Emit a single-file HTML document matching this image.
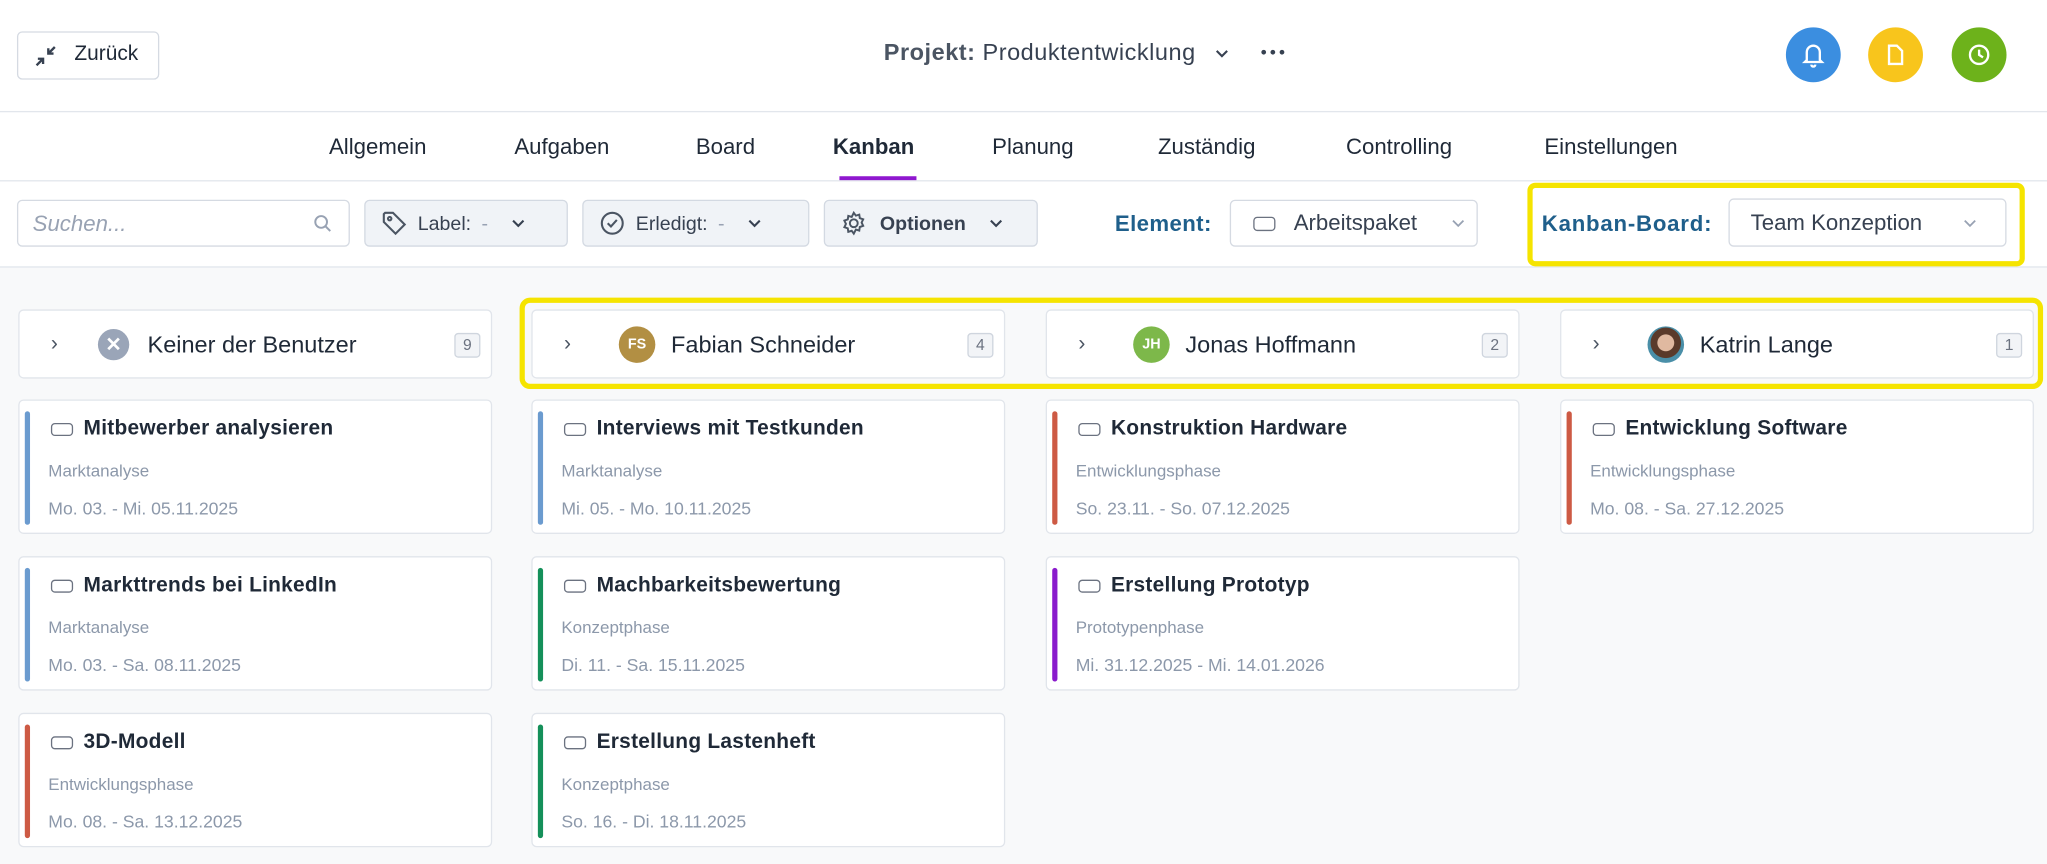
<!DOCTYPE html>
<html><head><meta charset="utf-8"><style>
*{box-sizing:border-box;margin:0;padding:0}
html,body{width:2047px;height:864px;overflow:hidden;background:#fff}
#w{position:absolute;left:0;top:0;width:1568px;height:662px;transform:scale(1.30548);transform-origin:0 0;font-family:"Liberation Sans",sans-serif;color:#1f2937;background:#f8f9fa}
.a{position:absolute}
.top{left:0;top:0;width:1568px;height:204px;background:#fff}
.hl{height:1px;background:#e2e6ec;left:0;width:1568px}
.btn{border:1px solid #d5dae2;border-radius:4px;background:#fff}
.fb{border:1px solid #d3d9e2;border-radius:4px;background:#f0f3f7;height:36px;top:153px;display:flex;align-items:center;font-size:15px;color:#374151}
.tab{top:103px;font-size:17px;color:#1f2937}
.circ{width:42px;height:42px;border-radius:50%;top:21px;display:flex;align-items:center;justify-content:center}
.col{top:237px;height:53px;width:363px;background:#fff;border:1px solid #e1e5eb;border-radius:4px}
.card{width:363px;height:103px;background:#fff;border:1px solid #e1e5eb;border-radius:4px}
.bar{position:absolute;left:4px;top:8px;width:4px;height:87px;border-radius:2px}
.ct{position:absolute;left:24px;top:13px;font-size:16px;font-weight:bold;color:#1f2937;display:flex;align-items:center;gap:8px;letter-spacing:.2px}
.ic{display:inline-block;width:17px;height:10px;border:1.6px solid #6b7280;border-radius:3px}
.ph{position:absolute;left:22px;top:46px;font-size:13px;color:#8c98aa}
.dt{position:absolute;left:22px;top:75px;font-size:13.5px;color:#8c98aa}
.cnt{position:absolute;right:8px;top:17px;width:20px;height:19px;border:1px solid #cfd5de;border-radius:3px;background:#f2f4f7;font-size:12px;color:#6b7280;text-align:center;line-height:17px}
.chev{position:absolute;left:24px;top:17px;font-size:16px;color:#4b5563}
.av{position:absolute;left:66px;top:12px;width:28px;height:28px;border-radius:50%;color:#fff;font-size:11px;font-weight:bold;display:flex;align-items:center;justify-content:center}
.nm{position:absolute;left:106px;top:16px;font-size:18px;color:#1f2937}
</style></head><body><div id="w">
<div class="a top"></div>
<div class="a hl" style="top:85px"></div>
<div class="a hl" style="top:138px"></div>
<div class="a hl" style="top:204px"></div>
<div class="a btn" style="left:13px;top:24px;width:109px;height:37px"></div>
<svg class="a" style="left:25px;top:33px" width="20" height="20" viewBox="0 0 20 20" fill="none" stroke="#374151" stroke-width="1.8"><path d="M3 17l5-5M4 12h4v4M17 3l-5 5M16 8h-4V4"/></svg>
<div class="a" style="left:57px;top:33px;font-size:16px">Zurück</div>
<div class="a" style="left:677px;top:30px;font-size:18px;letter-spacing:.4px;color:#374151;white-space:nowrap"><b style="color:#4b5563">Projekt:</b> Produktentwicklung</div>
<svg class="a" style="left:929px;top:35px" width="14" height="12" viewBox="0 0 14 12" fill="none" stroke="#374151" stroke-width="1.6"><path d="M3 4l4 4 4-4"/></svg>
<svg class="a" style="left:965px;top:36px" width="20" height="8" viewBox="0 0 20 8" fill="#374151"><circle cx="3" cy="4" r="1.8"/><circle cx="10" cy="4" r="1.8"/><circle cx="17" cy="4" r="1.8"/></svg>
<div class="a circ" style="left:1368px;background:#3b8ee0"><svg width="18" height="20" viewBox="0 0 18 20" fill="none" stroke="#fff" stroke-width="1.8"><path d="M4 14V8a5 5 0 0110 0v6l1.5 1.5h-13z M7.5 17.5a1.5 1.5 0 003 0"/></svg></div>
<div class="a circ" style="left:1431px;background:#f8c51c"><svg width="16" height="18" viewBox="0 0 16 18" fill="none" stroke="#fff" stroke-width="1.8"><path d="M3 2h6l4 4v10H3z"/></svg></div>
<div class="a circ" style="left:1495px;background:#6db21b"><svg width="20" height="20" viewBox="0 0 20 20" fill="none" stroke="#fff" stroke-width="1.8"><circle cx="10" cy="10" r="7"/><path d="M10 6v4l3 2"/></svg></div>
<div class="a tab" style="left:252px">Allgemein</div>
<div class="a tab" style="left:394px">Aufgaben</div>
<div class="a tab" style="left:533px">Board</div>
<div class="a tab" style="left:638px;font-weight:bold">Kanban</div>
<div class="a" style="left:643px;top:135px;width:59px;height:3px;background:#8f17cf"></div>
<div class="a tab" style="left:760px">Planung</div>
<div class="a tab" style="left:887px">Zuständig</div>
<div class="a tab" style="left:1031px">Controlling</div>
<div class="a tab" style="left:1183px">Einstellungen</div>
<div class="a btn" style="left:13px;top:153px;width:255px;height:36px"></div>
<div class="a" style="left:25px;top:162px;font-size:17px;font-style:italic;color:#98a2b3">Suchen...</div>
<svg class="a" style="left:240px;top:164px" width="14" height="14" viewBox="0 0 14 14" fill="none" stroke="#98a2b3" stroke-width="1.5"><circle cx="6" cy="6" r="4.5"/><path d="M9.5 9.5L13 13"/></svg>
<div class="a fb" style="left:279px;width:156px"><svg style="margin:0 8px 0 12px" width="20" height="20" viewBox="0 0 20 20" fill="none" stroke="#4b5563" stroke-width="1.6"><path d="M2 3v6l9 9 7-7-9-9H3z"/><circle cx="6.5" cy="6.5" r="1.3"/></svg>Label: <span style="color:#98a2b3;margin:0 16px 0 8px">-</span><svg width="14" height="12" viewBox="0 0 14 12" fill="none" stroke="#374151" stroke-width="1.6"><path d="M3 4l4 4 4-4"/></svg></div>
<div class="a fb" style="left:446px;width:174px"><svg style="margin:0 8px 0 12px" width="20" height="20" viewBox="0 0 20 20" fill="none" stroke="#4b5563" stroke-width="1.6"><circle cx="10" cy="10" r="8"/><path d="M6.5 10l2.5 2.5 4.5-5"/></svg>Erledigt: <span style="color:#98a2b3;margin:0 16px 0 8px">-</span><svg width="14" height="12" viewBox="0 0 14 12" fill="none" stroke="#374151" stroke-width="1.6"><path d="M3 4l4 4 4-4"/></svg></div>
<div class="a fb" style="left:631px;width:164px;font-weight:bold"><svg style="margin:0 10px 0 12px" width="20" height="20" viewBox="0 0 20 20" fill="none" stroke="#4b5563" stroke-width="1.5"><circle cx="10" cy="10" r="3"/><path d="M10 2l1.6 2.2 2.6-.8.4 2.7 2.6.9-1.2 2.5 1.2 2.5-2.6.9-.4 2.7-2.6-.8L10 18l-1.6-2.2-2.6.8-.4-2.7-2.6-.9 1.2-2.5-1.2-2.5 2.6-.9.4-2.7 2.6.8z"/></svg>Optionen<svg style="margin-left:16px" width="14" height="12" viewBox="0 0 14 12" fill="none" stroke="#374151" stroke-width="1.6"><path d="M3 4l4 4 4-4"/></svg></div>
<div class="a" style="left:854px;top:162px;font-size:17px;font-weight:bold;color:#1f5f8b;letter-spacing:.3px">Element:</div>
<div class="a btn" style="left:942px;top:153px;width:190px;height:36px"></div>
<div class="a" style="left:960px;top:166px;width:17px;height:11px;border:1.6px solid #6b7280;border-radius:3px"></div>
<div class="a" style="left:991px;top:161px;font-size:17px;color:#374151">Arbeitspaket</div>
<svg class="a" style="left:1110px;top:165px" width="14" height="12" viewBox="0 0 14 12" fill="none" stroke="#98a2b3" stroke-width="1.4"><path d="M3 4l4 4 4-4"/></svg>
<div class="a" style="left:1170px;top:140px;width:381px;height:64px;border:4px solid #f5e400;border-radius:6px"></div>
<div class="a" style="left:1181px;top:162px;font-size:17px;font-weight:bold;color:#1f5f8b;letter-spacing:.6px">Kanban-Board:</div>
<div class="a btn" style="left:1324px;top:152px;width:213px;height:37px"></div>
<div class="a" style="left:1341px;top:161px;font-size:17px;color:#374151">Team Konzeption</div>
<svg class="a" style="left:1502px;top:165px" width="14" height="12" viewBox="0 0 14 12" fill="none" stroke="#98a2b3" stroke-width="1.4"><path d="M3 4l4 4 4-4"/></svg>

<div class="a col" style="left:14px"><span class="chev">&#8250;</span><div class="av" style="background:#9aa5b8;width:24px;height:24px;top:14px;left:60px;font-size:15px">✕</div><span class="nm" style="left:98px">Keiner der Benutzer</span><span class="cnt">9</span></div>
<div class="a col" style="left:407px"><span class="chev">&#8250;</span><div class="av" style="background:#b28f43">FS</div><span class="nm">Fabian Schneider</span><span class="cnt">4</span></div>
<div class="a col" style="left:801px"><span class="chev">&#8250;</span><div class="av" style="background:#7db84a">JH</div><span class="nm">Jonas Hoffmann</span><span class="cnt">2</span></div>
<div class="a col" style="left:1195px"><span class="chev">&#8250;</span><div class="av" style="background:radial-gradient(circle at 50% 45%,#e0b9a0 0 30%,#5a3a2a 32% 55%,#4a8fa8 57%)"></div><span class="nm">Katrin Lange</span><span class="cnt">1</span></div>
<div class="a" style="left:398px;top:228px;width:1167px;height:70px;border:4px solid #f5e400;border-radius:8px"></div>

<div class="a card" style="left:14px;top:306px"><div class="bar" style="background:#6b9bcf"></div><div class="ct"><i class="ic"></i>Mitbewerber analysieren</div><div class="ph">Marktanalyse</div><div class="dt">Mo. 03. - Mi. 05.11.2025</div></div>
<div class="a card" style="left:14px;top:426px"><div class="bar" style="background:#6b9bcf"></div><div class="ct"><i class="ic"></i>Markttrends bei LinkedIn</div><div class="ph">Marktanalyse</div><div class="dt">Mo. 03. - Sa. 08.11.2025</div></div>
<div class="a card" style="left:14px;top:546px"><div class="bar" style="background:#cd5a44"></div><div class="ct"><i class="ic"></i>3D-Modell</div><div class="ph">Entwicklungsphase</div><div class="dt">Mo. 08. - Sa. 13.12.2025</div></div>
<div class="a card" style="left:407px;top:306px"><div class="bar" style="background:#6b9bcf"></div><div class="ct"><i class="ic"></i>Interviews mit Testkunden</div><div class="ph">Marktanalyse</div><div class="dt">Mi. 05. - Mo. 10.11.2025</div></div>
<div class="a card" style="left:407px;top:426px"><div class="bar" style="background:#15905a"></div><div class="ct"><i class="ic"></i>Machbarkeitsbewertung</div><div class="ph">Konzeptphase</div><div class="dt">Di. 11. - Sa. 15.11.2025</div></div>
<div class="a card" style="left:407px;top:546px"><div class="bar" style="background:#15905a"></div><div class="ct"><i class="ic"></i>Erstellung Lastenheft</div><div class="ph">Konzeptphase</div><div class="dt">So. 16. - Di. 18.11.2025</div></div>
<div class="a card" style="left:801px;top:306px"><div class="bar" style="background:#cd5a44"></div><div class="ct"><i class="ic"></i>Konstruktion Hardware</div><div class="ph">Entwicklungsphase</div><div class="dt">So. 23.11. - So. 07.12.2025</div></div>
<div class="a card" style="left:801px;top:426px"><div class="bar" style="background:#8a1bcc"></div><div class="ct"><i class="ic"></i>Erstellung Prototyp</div><div class="ph">Prototypenphase</div><div class="dt">Mi. 31.12.2025 - Mi. 14.01.2026</div></div>
<div class="a card" style="left:1195px;top:306px"><div class="bar" style="background:#cd5a44"></div><div class="ct"><i class="ic"></i>Entwicklung Software</div><div class="ph">Entwicklungsphase</div><div class="dt">Mo. 08. - Sa. 27.12.2025</div></div>
</div></body></html>
